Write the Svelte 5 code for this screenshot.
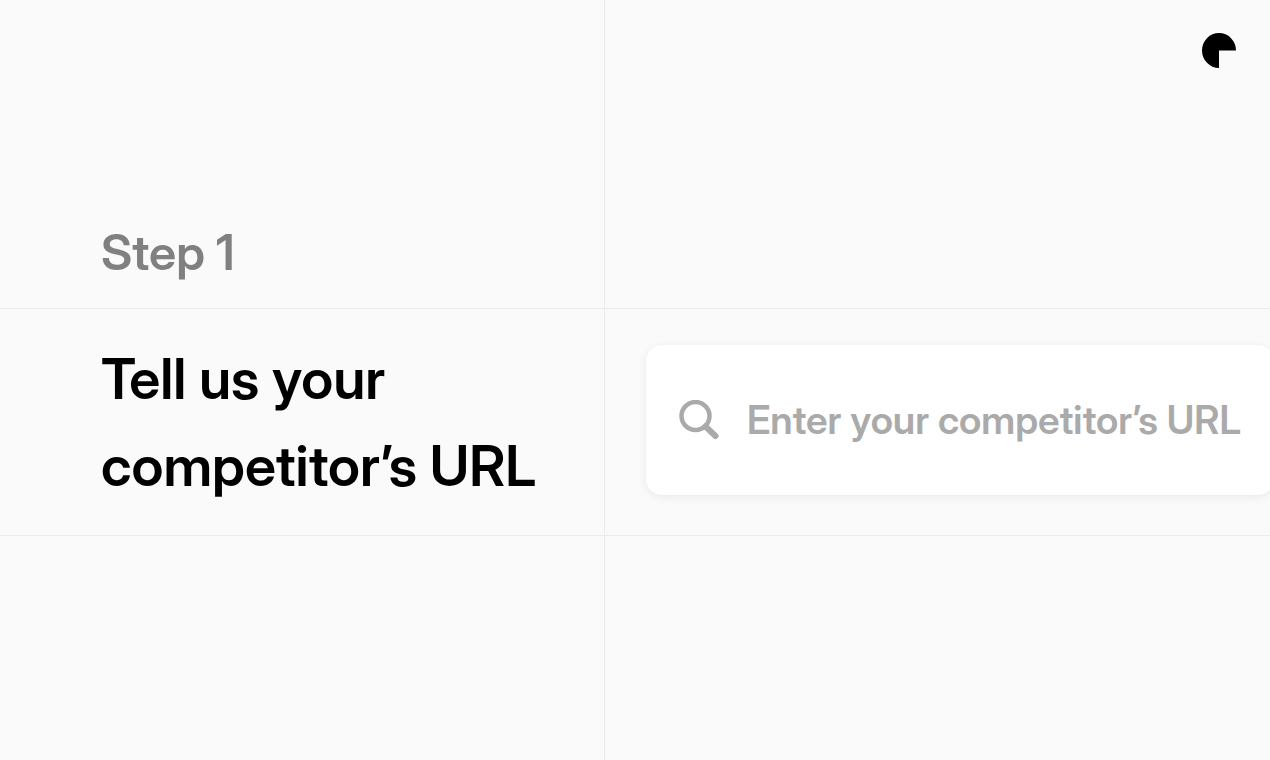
<script lang="ts">
  let url = '';
</script>

<main class="board">
  <div class="cell step">
    <p>Step 1</p>
  </div>
  <div class="cell brand">
    <svg class="logo" viewBox="0 0 34 35" aria-hidden="true">
      <path d="M17 17.5H34A17 17.5 0 1 0 17 35Z" />
    </svg>
  </div>

  <div class="cell prompt">
    <h1><label for="competitor-url">Tell us your competitor’s URL</label></h1>
  </div>
  <form class="cell entry" on:submit|preventDefault>
    <div class="search">
      <svg class="icon" viewBox="0 0 40 40" aria-hidden="true">
        <circle cx="16.5" cy="16" r="14" />
        <path class="handle" d="M26.5 26.5L36.5 36" />
      </svg>
      <input
        id="competitor-url"
        type="text"
        bind:value={url}
        placeholder="Enter your competitor’s URL"
      />
    </div>
  </form>

  <div class="cell"></div>
  <div class="cell"></div>
</main>

<style>
  :global(body) {
    background-color: #fafafa;
  }

  .board {
    display: grid;
    grid-template-columns: 605px minmax(0, 1fr);
    grid-template-rows: 309px auto 1fr;
    min-height: 100vh;
    overflow: hidden;
    font-family: 'Inter Display', Inter, sans-serif;
    font-variation-settings: 'opsz' 32;
    font-weight: 600;
  }

  .cell {
    box-sizing: border-box;
    border-bottom: 1px solid #ebebeb;
  }

  .cell:nth-child(odd) {
    border-right: 1px solid #ebebeb;
  }

  .cell:nth-last-child(-n + 2) {
    border-bottom: none;
  }

  .step {
    display: flex;
    align-items: flex-end;
    padding: 0 0 25px 101px;
  }

  .step p {
    margin: 0;
    color: #808080;
    font-size: 49px;
    line-height: 60px;
  }

  .brand {
    display: flex;
    justify-content: flex-end;
    padding: 33px 34px;
  }

  .logo {
    width: 34px;
    height: 35px;
  }

  .prompt {
    padding: 27px 40px 25px 101px;
  }

  h1 {
    margin: 0;
    color: #000;
    font-size: 56px;
    font-weight: 600;
    line-height: 87px;
  }

  .entry {
    padding: 36px 0 40px 41px;
  }

  /* the field runs slightly past the right edge of the board */
  .search {
    display: flex;
    align-items: center;
    gap: 28px;
    box-sizing: border-box;
    height: 150px;
    margin-right: -4px;
    padding-left: 33px;
    border-radius: 16px;
    background-color: #fff;
    box-shadow: 0 2px 10px rgba(0, 0, 0, 0.07);
  }

  .icon {
    flex: none;
    width: 40px;
    height: 40px;
    fill: none;
    stroke: #aaa;
    stroke-width: 4.5;
    stroke-linecap: round;
  }

  .handle {
    stroke-width: 6;
  }

  input {
    flex: 1;
    min-width: 0;
    padding: 0;
    border: none;
    outline: none;
    background: none;
    color: #000;
    font: inherit;
    font-variation-settings: inherit;
    font-size: 39px;
    line-height: 48px;
  }

  input::placeholder {
    color: #aaa;
    opacity: 1;
  }
</style>
